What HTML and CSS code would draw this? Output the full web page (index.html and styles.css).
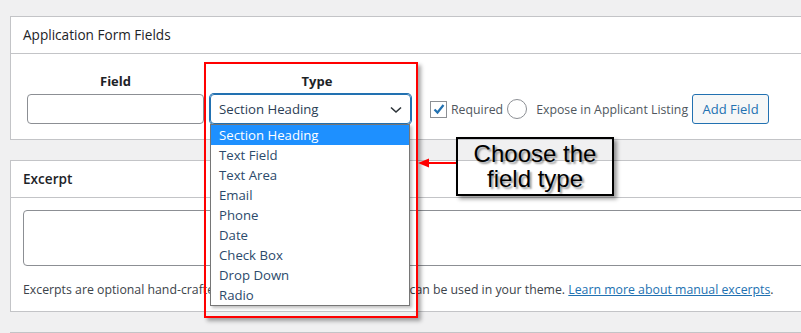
FILE: index.html
```html
<!DOCTYPE html>
<html lang="en">
<head>
    <meta charset="UTF-8">
    <title>Application Form Fields</title>
    <link rel="stylesheet" href="styles.css">
</head>
<body>
    <div class="wrap">
        <div class="postbox">
            <div class="postbox-header"><h2>Application Form Fields</h2></div>
            <div class="fields-row">
                <div class="col col-field">
                    <label class="col-label">Field</label>
                    <input type="text" class="text-input">
                </div>
                <div class="col col-type">
                    <label class="col-label type-label">Type</label>
                    <div class="select-box">
                        <span>Section Heading</span>
                        <svg class="chevron" width="12" height="8" viewBox="0 0 12 8"><path d="M1 1.5 L6 6 L11 1.5" fill="none" stroke="#2c3338" stroke-width="1.6"/></svg>
                        <ul class="options">
                            <li class="selected">Section Heading</li>
                            <li>Text Field</li>
                            <li>Text Area</li>
                            <li>Email</li>
                            <li>Phone</li>
                            <li>Date</li>
                            <li>Check Box</li>
                            <li>Drop Down</li>
                            <li>Radio</li>
                        </ul>
                    </div>
                </div>
                <div class="extras">
                    <span class="checkbox">
                        <svg width="14" height="14" viewBox="0 0 14 14"><path d="M2.5 7.5 L5.5 10.5 L11.5 3" fill="none" stroke="#2271b1" stroke-width="2.2"/></svg>
                    </span>
                    <span class="opt-text">Required</span>
                    <span class="radio"></span>
                    <span class="opt-text">Expose in Applicant Listing</span>
                    <button class="btn">Add Field</button>
                </div>
            </div>
        </div>

        <div class="postbox">
            <div class="postbox-header"><h2 class="semi">Excerpt</h2></div>
            <div class="excerpt-body">
                <div class="textarea"></div>
                <p class="help">Excerpts are optional hand-crafted summaries of your content that can be used in your theme. <a href="#">Learn more about manual excerpts</a>.</p>
            </div>
        </div>

        <div class="postbox"></div>
    </div>

    <div class="highlight"></div>
    <svg class="arrow" width="40" height="14" viewBox="0 0 40 14">
        <line x1="8" y1="7" x2="40" y2="7" stroke="#ff0000" stroke-width="2"/>
        <path d="M0 7 L11 2.5 L11 11.5 Z" fill="#ff0000"/>
    </svg>
    <div class="callout">Choose the<br>field type</div>
</body>
</html>
```

FILE: styles.css
```css
body {
    margin: 0;
    background: #f0f0f1;
    font-family: "Open Sans", "Noto Sans", sans-serif;
    font-size: 12.3px;
    color: #3c434a;
    overflow: hidden;
    position: relative;
    height: 333px;
}
.wrap {
    padding: 16px 0 0 10px;
}
.postbox {
    width: 1000px;
    background: #fff;
    border: 1px solid #c3c4c7;
    margin-bottom: 20px;
}
.postbox-header {
    border-bottom: 1px solid #c3c4c7;
    height: 36px;
}
.postbox-header h2 {
    margin: 0;
    padding: 0 12px;
    font-size: 13.6px;
    font-weight: 400;
    line-height: 36px;
    color: #1d2327;
}
.postbox-header h2.semi {
    font-weight: 600;
}
.fields-row {
    display: flex;
    padding: 17px 16px 15px;
}
.col {
    display: flex;
    flex-direction: column;
}
.col-label {
    text-align: center;
    font-size: 13px;
    font-weight: 700;
    color: #1d2327;
    line-height: 20px;
    margin-bottom: 3px;
}
.type-label {
    padding-left: 13px;
}
.col-field {
    width: 177px;
    margin-right: 6px;
}
.col-type {
    width: 201px;
}
.text-input {
    box-sizing: border-box;
    height: 30px;
    border: 1px solid #8c8f94;
    border-radius: 4px;
    margin: 0;
}
.select-box {
    position: relative;
    box-sizing: border-box;
    height: 30px;
    border: 1px solid #2271b1;
    box-shadow: 0 0 0 1px #2271b1;
    border-radius: 4px;
    display: flex;
    align-items: center;
    padding-left: 8px;
    font-size: 13.2px;
    color: #2c3e55;
}
.chevron {
    position: absolute;
    right: 8px;
    top: 11px;
}
.options {
    position: absolute;
    top: 29px;
    left: -1px;
    width: 200px;
    box-sizing: border-box;
    margin: 0;
    padding: 0;
    list-style: none;
    background: #fff;
    border: 1px solid #767676;
    box-shadow: 2px 2px 3px rgba(0, 0, 0, 0.25);
}
.options li {
    height: 20px;
    line-height: 20px;
    padding-left: 8px;
    color: #2c4a6b;
}
.options li.selected {
    background: #1e90ff;
    color: #fff;
}
.extras {
    align-self: flex-end;
    display: flex;
    align-items: center;
    height: 30px;
    margin-left: 19px;
}
.checkbox {
    box-sizing: border-box;
    width: 17px;
    height: 17px;
    border: 1px solid #8c8f94;
    display: flex;
    align-items: center;
    justify-content: center;
    margin-right: 4px;
}
.opt-text {
    color: #50575e;
}
.radio {
    box-sizing: border-box;
    width: 20px;
    height: 20px;
    border: 1px solid #8c8f94;
    border-radius: 50%;
    margin-left: 4px;
    margin-right: 9px;
}
.btn {
    margin-left: 4px;
    height: 30px;
    width: 77px;
    border: 1px solid #2271b1;
    border-radius: 3px;
    background: #f6f7f7;
    color: #2271b1;
    font-family: inherit;
    font-size: 13px;
    padding: 0;
}
.excerpt-body {
    padding: 12px 12px 12px 12px;
}
.textarea {
    box-sizing: border-box;
    height: 56px;
    border: 1px solid #8c8f94;
    border-radius: 4px;
}
.help {
    margin: 15px 0 0;
    line-height: 18px;
}
.help a {
    color: #2271b1;
}
.highlight {
    position: absolute;
    left: 204px;
    top: 62px;
    width: 210px;
    height: 252px;
    border: 2px solid #ff0000;
    box-shadow: 3px 3px 4px rgba(0, 0, 0, 0.35);
}
.arrow {
    position: absolute;
    left: 418px;
    top: 156px;
}
.callout {
    position: absolute;
    left: 456px;
    top: 137px;
    width: 154px;
    height: 53px;
    border: 2px solid #000;
    box-shadow: 3px 3px 4px rgba(0, 0, 0, 0.4);
    font-family: "Liberation Sans", Arial, sans-serif;
    font-size: 24px;
    line-height: 25px;
    text-align: center;
    color: #000;
    padding-top: 2px;
    text-shadow: 2px 2px 2px rgba(0, 0, 0, 0.4);
}
```
